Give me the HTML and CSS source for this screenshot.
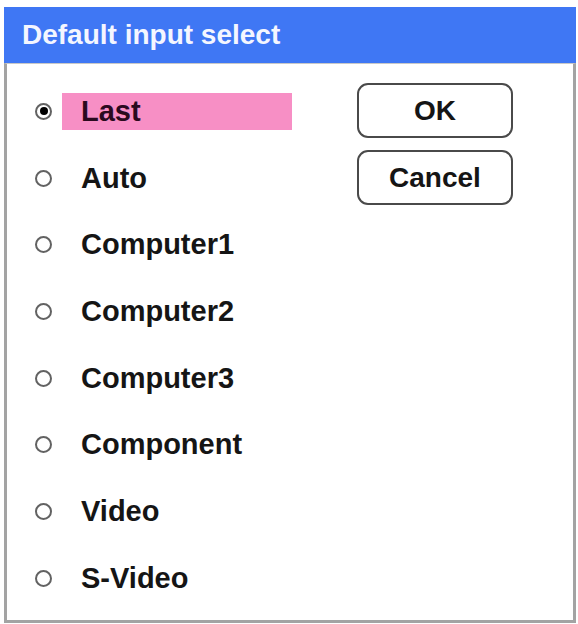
FILE: index.html
```html
<!DOCTYPE html>
<html lang="en">
<head>
    <meta charset="UTF-8">
    <meta name="viewport" content="width=device-width, initial-scale=1.0">
    <title>Default input select</title>
    <link rel="stylesheet" href="styles.css">
</head>
<body>

    <!-- Dialog window -->
    <div class="dialog">
        <div class="title-bar">Default input select</div>

        <div class="dialog-body">
            <!-- Input choices -->
            <ul class="choices">
                <li class="choice selected"><span class="radio"></span><span class="label">Last</span></li>
                <li class="choice"><span class="radio"></span><span class="label">Auto</span></li>
                <li class="choice"><span class="radio"></span><span class="label">Computer1</span></li>
                <li class="choice"><span class="radio"></span><span class="label">Computer2</span></li>
                <li class="choice"><span class="radio"></span><span class="label">Computer3</span></li>
                <li class="choice"><span class="radio"></span><span class="label">Component</span></li>
                <li class="choice"><span class="radio"></span><span class="label">Video</span></li>
                <li class="choice"><span class="radio"></span><span class="label">S-Video</span></li>
            </ul>

            <!-- OK / Cancel -->
            <div class="actions">
                <button class="btn">OK</button>
                <button class="btn">Cancel</button>
            </div>
        </div>
    </div>

</body>
</html>
```

FILE: styles.css
```css
body {
    margin: 0;
    background-color: #ffffff;
    font-family: "Liberation Sans", Arial, sans-serif;
    font-weight: bold;
    color: #151515;
}

.dialog {
    width: 572px;
    height: 616px;
    margin: 7px 0 0 4px;
    display: flex;
    flex-direction: column;
}

.title-bar {
    height: 56px;
    flex-shrink: 0;
    background-color: #3f77f4;
    color: #f4f6ff;
    font-size: 28px;
    display: flex;
    align-items: center;
    padding-left: 18px;
}

.dialog-body {
    flex: 1;
    display: flex;
    border: 3px solid #a3a3a3;
    border-top: 1px solid #c8c8c8;
}

.choices {
    list-style: none;
    margin: 0;
    padding: 14px 0 0 0;
}

.choice {
    height: 66.7px;
    display: flex;
    align-items: center;
}

.radio {
    flex-shrink: 0;
    width: 17px;
    height: 17px;
    box-sizing: border-box;
    border: 2px solid #626262;
    border-radius: 50%;
    margin-left: 28px;
    display: flex;
    align-items: center;
    justify-content: center;
}

.selected .radio::after {
    content: "";
    width: 8px;
    height: 8px;
    border-radius: 50%;
    background-color: #000000;
}

.label {
    flex-shrink: 0;
    width: 211px;
    height: 37px;
    margin-left: 10px;
    padding-left: 19px;
    font-size: 29px;
    display: flex;
    align-items: center;
}

.selected .label {
    background-color: #f78fc5;
    color: #2a0a1e;
}

.actions {
    display: flex;
    flex-direction: column;
    gap: 12px;
    padding-top: 19px;
    margin-left: 65px;
}

.btn {
    width: 156px;
    height: 55px;
    background: #ffffff;
    border: 2px solid #4a4a4a;
    border-radius: 11px;
    font-family: "Liberation Sans", Arial, sans-serif;
    font-weight: bold;
    font-size: 28px;
    color: #151515;
    padding: 0;
}
```
